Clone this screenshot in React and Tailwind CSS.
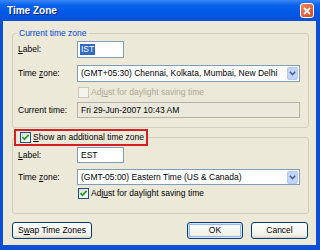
import React from 'react';

const font = { fontFamily: '"Liberation Sans", Arial, sans-serif' };

const Check = ({ checked, disabled }) => (
    <span
        className={`w-[11px] h-[11px] flex items-center justify-center shrink-0 border ${
            disabled ? 'border-[#c9c7ba] bg-[#f4f3ee]' : 'border-[#1c5180] bg-[linear-gradient(135deg,#dcdcd7,#ffffff)]'
        }`}
    >
        {checked && (
            <svg width="9" height="9" viewBox="0 0 9 9">
                <path d="M1.5 4.2 L3.5 6.3 L7.6 1.8" fill="none" stroke="#21a121" strokeWidth="1.8" />
            </svg>
        )}
    </span>
);

const Field = ({ children, w = 'w-[223px]', h = 'h-[17px]', readOnly }) => (
    <div
        className={`${w} ${h} flex items-center border ${
            readOnly ? 'border-[#b5b3a8] bg-[#ebe9dc]' : 'border-[#7f9db9] bg-white'
        }`}
    >
        {children}
    </div>
);

const Select = ({ text, h }) => (
    <Field h={h}>
        <span className="flex-1 pl-[3px] text-black whitespace-nowrap overflow-hidden">{text}</span>
        <span className="w-[11px] h-[13px] mr-[1px] rounded-[2px] bg-[#c3d3fd] border border-[#b6c9f5] flex items-center justify-center">
            <svg width="7" height="5" viewBox="0 0 7 5">
                <path d="M0.8 0.8 L3.5 3.6 L6.2 0.8" fill="none" stroke="#4d6185" strokeWidth="1.5" />
            </svg>
        </span>
    </Field>
);

const Row = ({ label, children }) => (
    <div className="flex items-center">
        <span className="w-[59px] text-black">{label}</span>
        {children}
    </div>
);

const Btn = ({ children, w, primary }) => (
    <button
        className={`${w} h-[17px] rounded-[3px] border border-[#003c74] bg-[linear-gradient(#ffffff,#f0f0ea_80%,#d6d0c5)] text-black flex items-center justify-center ${
            primary ? 'shadow-[inset_0_0_0_1px_#cee7ff,inset_0_0_0_2px_#98b8ea]' : ''
        }`}
    >
        {children}
    </button>
);

export default function App() {
    return (
        <div className="w-[320px] h-[250px] bg-[#0a4fd6] flex flex-col text-[8.5px] overflow-hidden" style={font}>
            {/* Title bar */}
            <div className="h-[21px] shrink-0 flex items-center justify-between pl-[7px] pr-[6px] bg-[linear-gradient(#3a86f7,#0a62ec_25%,#0058e6_60%,#0a50d6)]">
                <span className="text-white font-bold text-[10px] [text-shadow:1px_1px_0_#0a2a8a]">Time Zone</span>
                <span className="w-[14px] h-[15px] rounded-[3px] border border-white bg-[linear-gradient(135deg,#f08a68,#d9431c)] flex items-center justify-center">
                    <svg width="8" height="8" viewBox="0 0 8 8">
                        <path d="M1 1 L7 7 M7 1 L1 7" stroke="white" strokeWidth="1.8" />
                    </svg>
                </span>
            </div>

            {/* Body */}
            <div className="flex-1 ml-[3px] mr-[4px] mb-[5px] bg-[#ece9d8] pl-[9px] pr-[7px] pt-[12px] flex flex-col">
                {/* Current time zone */}
                <div className="relative border border-[#d0d0bf] rounded-[3px] pl-[5px] pt-[7px] pb-[9px] flex flex-col">
                    <span className="absolute -top-[6px] left-[4px] px-[2px] bg-[#ece9d8] text-[#0046d5] leading-[11px]">
                        Current time zone
                    </span>
                    <Row label={<><u>L</u>abel:</>}>
                        <Field w="w-[47px]">
                            <span className="ml-[2px] px-[1px] bg-[#316ac5] text-white leading-[11px]">IST</span>
                        </Field>
                    </Row>
                    <div className="mt-[7px]">
                        <Row label={<>Time <u>z</u>one:</>}>
                            <Select text="(GMT+05:30) Chennai, Kolkata, Mumbai, New Delhi" />
                        </Row>
                    </div>
                    <div className="mt-[4px] h-[13px] pl-[60px] flex items-center gap-[2px] text-[#aca899]">
                        <Check disabled />
                        <span>Adj<u>u</u>st for daylight saving time</span>
                    </div>
                    <div className="mt-[3px]">
                        <Row label="Current time:">
                            <Field readOnly h="h-[16px]">
                                <span className="pl-[3px] text-black">Fri 29-Jun-2007 10:43 AM</span>
                            </Field>
                        </Row>
                    </div>
                </div>

                {/* Additional time zone */}
                <div className="relative mt-[9px] border border-[#d0d0bf] rounded-[3px] pl-[5px] pt-[9px] pb-[13px] flex flex-col">
                    <div className="absolute -top-[9px] left-[1px] h-[17px] border-2 border-[#d42020] bg-[#ece9d8] flex items-center pl-[4px] pr-[2px] gap-[2px]">
                        <Check checked />
                        <span className="text-black whitespace-nowrap"><u>S</u>how an additional time zone</span>
                    </div>
                    <Row label={<><u>L</u>abel:</>}>
                        <Field w="w-[47px]" h="h-[16px]">
                            <span className="pl-[3px] text-black">EST</span>
                        </Field>
                    </Row>
                    <div className="mt-[6px]">
                        <Row label={<>Time <u>z</u>one:</>}>
                            <Select text="(GMT-05:00) Eastern Time (US & Canada)" h="h-[16px]" />
                        </Row>
                    </div>
                    <div className="mt-[2px] h-[13px] pl-[60px] flex items-center gap-[2px] text-black">
                        <Check checked />
                        <span>Adj<u>u</u>st for daylight saving time</span>
                    </div>
                </div>

                {/* Buttons */}
                <div className="mt-[8px] flex items-center">
                    <Btn w="w-[80px]">S<u>w</u>ap Time Zones</Btn>
                    <div className="flex-1" />
                    <Btn w="w-[56px]" primary>OK</Btn>
                    <div className="w-[8px]" />
                    <Btn w="w-[57px]">Cancel</Btn>
                    <div className="w-[1px]" />
                </div>
            </div>
        </div>
    );
}
